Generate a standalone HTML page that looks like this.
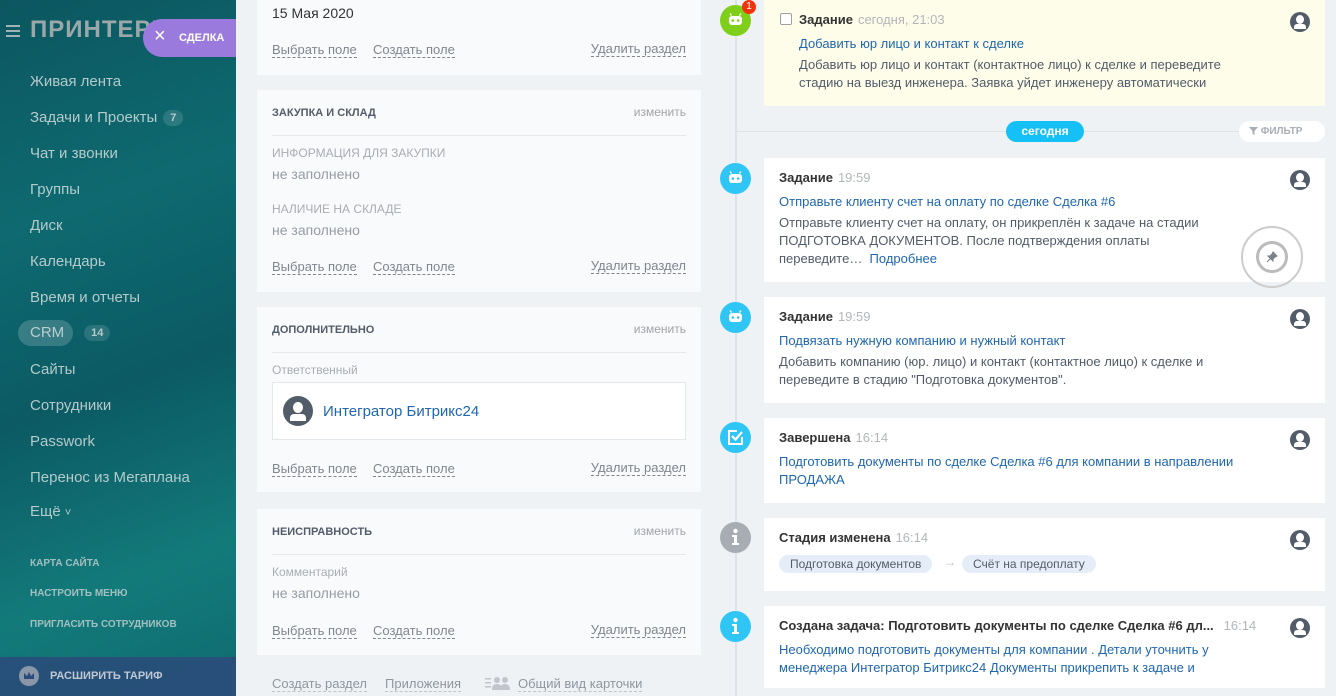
<!DOCTYPE html>
<html><head><meta charset="utf-8"><style>
*{box-sizing:border-box;margin:0;padding:0}
body{width:1336px;height:696px;overflow:hidden;background:#eef2f4;font-family:"Liberation Sans","Noto Sans CJK SC",sans-serif;position:relative}
.a{position:absolute}
#sb{left:0;top:0;width:236px;height:696px;background:linear-gradient(160deg,#0c5660 0%,#0e6a70 30%,#0b5a64 55%,#137a7a 80%,#0f6b70 100%);overflow:hidden}
.mi{position:absolute;left:30px;color:#d2dcdc;font-size:15px;opacity:.85}
.sm{position:absolute;left:30px;color:#c6d2d2;font-size:10px;font-weight:bold;opacity:.8}
.cnt{display:inline-block;background:rgba(255,255,255,.15);border-radius:10px;font-size:11px;font-weight:bold;padding:2px 7px;margin-left:6px;vertical-align:1px}
.card{position:absolute;left:257px;width:444px;background:#f9fafc}
.lk{position:absolute;font-size:13px;color:#80868e;border-bottom:1px dashed #80868e;line-height:15px}
.h{position:absolute;left:15px;font-size:11px;font-weight:bold;color:#535c69}
.ch{position:absolute;right:15px;font-size:12px;color:#a0a4a9}
.lbl{position:absolute;left:15px;font-size:12px;color:#a8adb4}
.val{position:absolute;left:15px;font-size:14px;color:#959ca4}
.tc{position:absolute;left:764px;width:561px;background:#fff}
.ic{position:absolute;left:720px;width:31px;height:31px;border-radius:50%;background:#2fc6f6}
.ic svg{position:absolute;left:0;top:0}
.t{position:absolute;left:15px;font-size:13px;color:#333;font-weight:bold}
.t span{font-weight:normal;color:#b2b6bb;margin-left:5px}
.bl{position:absolute;left:15px;font-size:13px;color:#2067b0;line-height:18px}
.tx{position:absolute;left:15px;font-size:13px;color:#525c69;line-height:18px}
.av{position:absolute;right:15px;top:12px;width:20px;height:20px;border-radius:50%;background:#535c69;overflow:hidden}
.av:before{content:"";position:absolute;left:6px;top:3px;width:8px;height:9px;border-radius:50%;background:#fff}
.av:after{content:"";position:absolute;left:4px;top:12px;width:12px;height:5px;border-radius:3px 3px 0 0;background:#fff}
</style></head><body>
<div id="sb" class="a">
<div class="a" style="left:6px;top:25px;width:14px;height:2px;background:#9fb3b6;box-shadow:0 5px 0 #9fb3b6,0 10px 0 #9fb3b6"></div>
<div class="a" style="left:30px;top:16px;font-size:24px;color:#9aa8aa;font-weight:bold;letter-spacing:1px">ПРИНТЕРЫ</div>
<div class="mi" style="top:73px">Живая лента</div>
<div class="mi" style="top:109px">Задачи и Проекты<span class="cnt">7</span></div>
<div class="mi" style="top:145px">Чат и звонки</div>
<div class="mi" style="top:181px">Группы</div>
<div class="mi" style="top:217px">Диск</div>
<div class="mi" style="top:253px">Календарь</div>
<div class="mi" style="top:289px">Время и отчеты</div>
<div class="a" style="left:18px;top:320px;width:55px;height:26px;border-radius:13px;background:rgba(255,255,255,.18)"></div>
<div class="mi" style="top:324px">CRM<span class="cnt" style="margin-left:20px">14</span></div>
<div class="mi" style="top:361px">Сайты</div>
<div class="mi" style="top:397px">Сотрудники</div>
<div class="mi" style="top:433px">Passwork</div>
<div class="mi" style="top:469px">Перенос из Мегаплана</div>
<div class="mi" style="top:503px">Ещё <span style="font-size:11px">˅</span></div>
<div class="sm" style="top:558px">КАРТА САЙТА</div>
<div class="sm" style="top:588px">НАСТРОИТЬ МЕНЮ</div>
<div class="sm" style="top:619px">ПРИГЛАСИТЬ СОТРУДНИКОВ</div>
<div class="a" style="left:0;top:657px;width:236px;height:39px;background:#2c4a7a;opacity:.85"></div>
<svg class="a" style="left:19px;top:666px" width="20" height="20"><circle cx="10" cy="10" r="10" fill="#8a97a8"/><path d="M5 13 L5 7 L8 10 L10 6 L12 10 L15 7 L15 13 Z" fill="#2c4a7a"/></svg>
<div class="a" style="left:50px;top:670px;font-size:11px;font-weight:bold;color:#bfc7d3">РАСШИРИТЬ ТАРИФ</div>
</div>
<div class="a" style="left:143px;top:19px;width:93px;height:38px;background:#9a7bdd;border-radius:19px 0 0 19px"></div>
<div class="a" style="left:154px;top:25px;font-size:20px;color:#fff">×</div>
<div class="a" style="left:179px;top:32px;font-size:11px;font-weight:bold;color:#fff">СДЕЛКА</div>

<div class="card" style="top:0;height:75px">
<div class="a" style="left:15px;top:5px;font-size:14px;color:#333">15 Мая 2020</div>
<div class="lk" style="left:15px;top:42px">Выбрать поле</div><div class="lk" style="left:116px;top:42px">Создать поле</div><div class="lk" style="right:15px;top:41px">Удалить раздел</div>
</div>
<div class="card" style="top:90px;height:202px">
<div class="h" style="top:17px">ЗАКУПКА И СКЛАД</div><div class="ch" style="top:15px">изменить</div>
<div class="a" style="left:15px;right:15px;top:45px;height:1px;background:#e5e8eb"></div>
<div class="lbl" style="top:56px">ИНФОРМАЦИЯ ДЛЯ ЗАКУПКИ</div><div class="val" style="top:76px">не заполнено</div>
<div class="lbl" style="top:112px">НАЛИЧИЕ НА СКЛАДЕ</div><div class="val" style="top:132px">не заполнено</div>
<div class="lk" style="left:15px;top:169px">Выбрать поле</div><div class="lk" style="left:116px;top:169px">Создать поле</div><div class="lk" style="right:15px;top:168px">Удалить раздел</div>
</div>
<div class="card" style="top:307px;height:185px">
<div class="h" style="top:17px">ДОПОЛНИТЕЛЬНО</div><div class="ch" style="top:15px">изменить</div>
<div class="a" style="left:15px;right:15px;top:45px;height:1px;background:#e5e8eb"></div>
<div class="lbl" style="top:56px">Ответственный</div>
<div class="a" style="left:15px;top:75px;width:414px;height:58px;background:#fff;border:1px solid #e5e8eb"></div>
<div class="a" style="left:26px;top:89px;width:30px;height:30px;border-radius:50%;background:#535c69;overflow:hidden"><div class="a" style="left:10px;top:6px;width:10px;height:11px;border-radius:50%;background:#fff"></div><div class="a" style="left:7px;top:18px;width:16px;height:7px;border-radius:4px 4px 0 0;background:#fff"></div></div>
<div class="a" style="left:66px;top:96px;font-size:15px;color:#2067b0">Интегратор Битрикс24</div>
<div class="lk" style="left:15px;top:154px">Выбрать поле</div><div class="lk" style="left:116px;top:154px">Создать поле</div><div class="lk" style="right:15px;top:153px">Удалить раздел</div>
</div>
<div class="card" style="top:509px;height:146px">
<div class="h" style="top:17px">НЕИСПРАВНОСТЬ</div><div class="ch" style="top:15px">изменить</div>
<div class="a" style="left:15px;right:15px;top:45px;height:1px;background:#e5e8eb"></div>
<div class="lbl" style="top:56px">Комментарий</div><div class="val" style="top:76px">не заполнено</div>
<div class="lk" style="left:15px;top:114px">Выбрать поле</div><div class="lk" style="left:116px;top:114px">Создать поле</div><div class="lk" style="right:15px;top:113px">Удалить раздел</div>
</div>
<div class="lk" style="left:272px;top:676px;color:#9096a0;border-color:#c0c4c9">Создать раздел</div>
<div class="lk" style="left:385px;top:676px;color:#9096a0;border-color:#c0c4c9">Приложения</div>
<svg class="a" style="left:485px;top:675px" width="28" height="16"><g fill="#c2c6cc"><rect x="0" y="3" width="6" height="1.5"/><rect x="0" y="7" width="6" height="1.5"/><rect x="0" y="11" width="6" height="1.5"/><circle cx="12" cy="5" r="3"/><path d="M7 15 Q7 9 12 9 Q17 9 17 15Z"/><circle cx="20" cy="5" r="3"/><path d="M15 15 Q15 9 20 9 Q25 9 25 15Z"/></g></svg>
<div class="lk" style="left:518px;top:676px;color:#9096a0;border-color:#c0c4c9">Общий вид карточки</div>

<div class="a" style="left:735px;top:0;width:2px;height:696px;background:#dfe3e8"></div>
<div class="a" style="left:737px;top:131px;width:588px;height:1px;background:#dfe3e8"></div>
<div class="a" style="left:1006px;top:121px;width:78px;height:21px;border-radius:11px;background:#14c0f6;color:#fff;font-size:12px;font-weight:bold;text-align:center;line-height:21px">сегодня</div>
<div class="a" style="left:1239px;top:121px;width:86px;height:21px;border-radius:11px;background:#fff;color:#a9aeb5;font-size:10px;font-weight:bold;line-height:21px;padding-left:10px"><svg width="9" height="8" style="vertical-align:-1px"><path d="M0 0H9L5.5 4V8L3.5 7V4Z" fill="#a9aeb5"/></svg> ФИЛЬТР</div>

<div class="tc" style="top:0;height:106px;background:#fefde9">
<div class="a" style="left:16px;top:13px;width:12px;height:12px;border:1px solid #9aa0a6;border-radius:2px;background:#fff"></div>
<div class="t" style="left:35px;top:12px">Задание<span>сегодня, 21:03</span></div>
<div class="bl" style="left:35px;top:35px">Добавить юр лицо и контакт к сделке</div>
<div class="tx" style="left:35px;top:56px">Добавить юр лицо и контакт (контактное лицо) к сделке и переведите<br>стадию на выезд инженера. Заявка уйдет инженеру автоматически</div>
<div class="av"></div></div>

<svg width="0" height="0" style="position:absolute"><defs><g id="rb"><path d="M11.5 10.5 L10 8.5 M19.5 10.5 L21 8.5" stroke="#fff" stroke-width="1.3"/><rect x="9" y="11" width="13" height="9" rx="3" fill="#fff"/><circle cx="12.8" cy="15.5" r="1.3" fill="currentColor"/><circle cx="18.2" cy="15.5" r="1.3" fill="currentColor"/></g></defs></svg>
<div class="ic" style="top:5px;background:#7fce1a;color:#7fce1a"><svg width="31" height="31"><use href="#rb"/></svg></div>
<div class="a" style="left:742px;top:0;width:14px;height:14px;border-radius:50%;background:#f2340e;color:#fff;font-size:10px;text-align:center;line-height:14px">1</div>

<div class="tc" style="top:158px;height:124px">
<div class="t" style="top:12px">Задание<span>19:59</span></div>
<div class="bl" style="top:35px">Отправьте клиенту счет на оплату по сделке Сделка #6</div>
<div class="tx" style="top:56px">Отправьте клиенту счет на оплату, он прикреплён к задаче на стадии<br>ПОДГОТОВКА ДОКУМЕНТОВ. После подтверждения оплаты<br>переведите…&nbsp; <span style="color:#2067b0">Подробнее</span></div>
<div class="av"></div>
<div class="a" style="left:477px;top:68px;width:62px;height:62px;border-radius:50%;border:2px solid #ccc"></div>
<div class="a" style="left:492px;top:83px;width:32px;height:32px;border-radius:50%;border:3px solid #bbb"></div>
<svg class="a" style="left:502px;top:93px" width="12" height="12"><path d="M7 1 L11 5 L9 6 L7 8 L7 10 L2 5 L4 5 L6 3Z M4.5 7.5 L1 11" fill="#7a828c" stroke="#7a828c" stroke-width="1"/></svg>
</div>
<div class="ic" style="top:163px;color:#2fc6f6"><svg width="31" height="31"><use href="#rb"/></svg></div>

<div class="tc" style="top:297px;height:106px">
<div class="t" style="top:12px">Задание<span>19:59</span></div>
<div class="bl" style="top:35px">Подвязать нужную компанию и нужный контакт</div>
<div class="tx" style="top:56px">Добавить компанию (юр. лицо) и контакт (контактное лицо) к сделке и<br>переведите в стадию "Подготовка документов".</div>
<div class="av"></div></div>
<div class="ic" style="top:302px;color:#2fc6f6"><svg width="31" height="31"><use href="#rb"/></svg></div>

<div class="tc" style="top:418px;height:85px">
<div class="t" style="top:12px">Завершена<span>16:14</span></div>
<div class="bl" style="top:35px">Подготовить документы по сделке Сделка #6 для компании в направлении<br>ПРОДАЖА</div>
<div class="av"></div></div>
<div class="ic" style="top:422px"><svg width="31" height="31"><path d="M17 9 H9 V22 H22 V15" fill="none" stroke="#fff" stroke-width="2"/><path d="M12 14 L15.5 17.5 L22 10" fill="none" stroke="#fff" stroke-width="2.2"/></svg></div>

<div class="tc" style="top:518px;height:73px">
<div class="t" style="top:12px">Стадия изменена<span>16:14</span></div>
<div class="a" style="left:15px;top:37px;height:18px;padding:0 11px;border-radius:9px;background:#e5eef8;font-size:12px;color:#535c69;line-height:18px">Подготовка документов</div>
<div class="a" style="left:180px;top:37px;font-size:12px;color:#bbb">→</div>
<div class="a" style="left:198px;top:37px;height:18px;padding:0 11px;border-radius:9px;background:#e5eef8;font-size:12px;color:#535c69;line-height:18px">Счёт на предоплату</div>
<div class="av"></div></div>
<div class="ic" style="top:522px;background:#a8adb4"><svg width="31" height="31"><circle cx="15.5" cy="9" r="2.2" fill="#fff"/><path d="M12 13 H17 V21 H19 V23 H12 V21 H14 V15 H12Z" fill="#fff"/></svg></div>

<div class="tc" style="top:606px;height:82px">
<div class="t" style="top:12px">Создана задача: Подготовить документы по сделке Сделка #6 дл...<span style="margin-left:10px">16:14</span></div>
<div class="bl" style="top:35px">Необходимо подготовить документы для компании . Детали уточнить у<br>менеджера Интегратор Битрикс24 Документы прикрепить к задаче и</div>
<div class="av"></div></div>
<div class="ic" style="top:611px"><svg width="31" height="31"><circle cx="15.5" cy="9" r="2.2" fill="#fff"/><path d="M12 13 H17 V21 H19 V23 H12 V21 H14 V15 H12Z" fill="#fff"/></svg></div>
</body></html>
